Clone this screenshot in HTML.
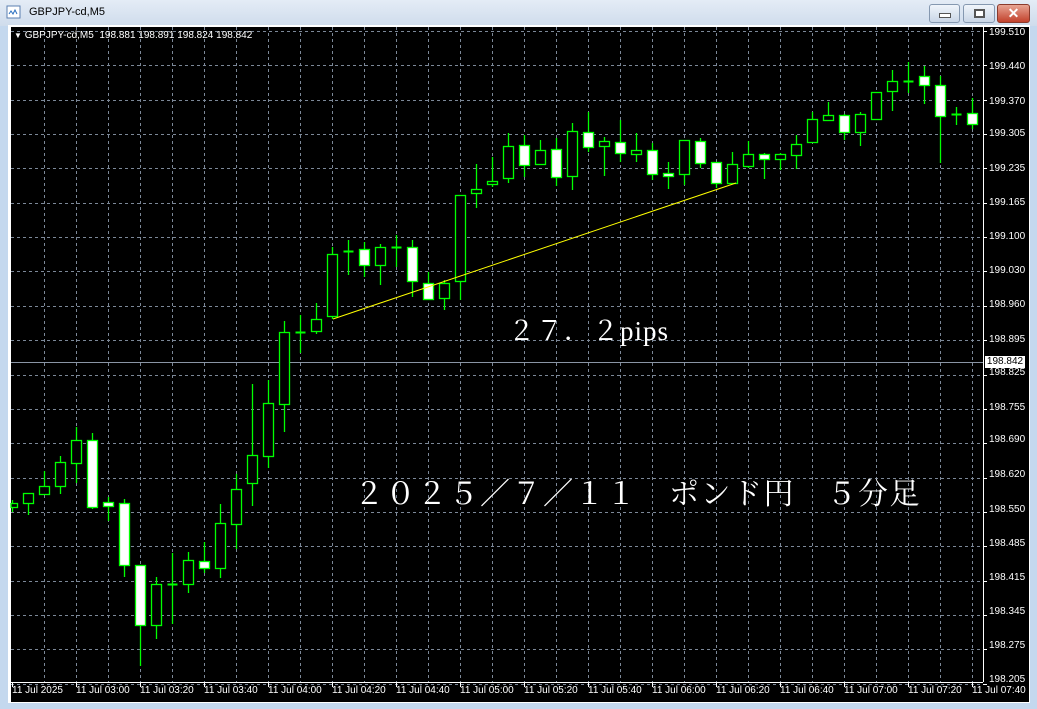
<!DOCTYPE html>
<html><head><meta charset="utf-8"><style>
body{margin:0;width:1037px;height:709px;overflow:hidden;background:#c4d8ee;font-family:"Liberation Sans",sans-serif;position:relative}
.tb{position:absolute;left:0;top:0;width:1037px;height:26px;background:linear-gradient(#e4ecf6,#cfdcec)}
.btn{position:absolute;top:4px;height:17px;border:1px solid #8598b0;border-radius:3px;background:linear-gradient(#f0f5fb,#c9d6e6)}
#chart{position:absolute;left:0;top:0}
.pl{position:absolute;left:989px;font-size:10px;color:#fff;line-height:10px;margin-top:2px}
.tl{position:absolute;top:686px;font-size:10px;color:#fff;line-height:10px;white-space:nowrap}
</style></head><body>
<div class="tb"></div>
<svg style="position:absolute;left:6px;top:5px" width="16" height="15"><rect x="1" y="1" width="13" height="12" fill="#fff" stroke="#5b7fb0"/><path d="M3 9 l2 -3 l2 3 l2 -4 l2 4" stroke="#2a6fc0" fill="none"/></svg>
<div style="position:absolute;left:29px;top:6px;font-size:11px;color:#000">GBPJPY-cd,M5</div>
<div class="btn" style="left:929px;width:29px"><div style="position:absolute;left:9px;top:8px;width:10px;height:3px;background:#fff;border:1px solid #555"></div></div>
<div class="btn" style="left:963px;width:30px"><div style="position:absolute;left:10px;top:4px;width:7px;height:5px;border:2px solid #555;background:#fff"></div></div>
<div class="btn" style="left:997px;width:31px;background:linear-gradient(#e8a593,#c2412c);border-color:#8a3a2c"><div style="position:absolute;left:0;top:0;width:31px;text-align:center;color:#fff;font-weight:bold;font-size:14px;line-height:17px">✕</div></div>
<div style="position:absolute;left:8px;top:25px;width:1022px;height:678px;background:#fff"></div>
<div style="position:absolute;left:11px;top:27px;width:1018px;height:675px;background:#000"></div>
<svg id="chart" width="1037" height="709"></svg>
<div style="position:absolute;left:14px;top:31px;font-size:10px;color:#fff;line-height:10px;white-space:nowrap"><span style="font-size:8px">▼</span> GBPJPY-cd,M5&nbsp; 198.881 198.891 198.824 198.842</div>
<div class="pl" style="top:26px">199.510</div><div class="pl" style="top:60px">199.440</div><div class="pl" style="top:95px">199.370</div><div class="pl" style="top:127px">199.305</div><div class="pl" style="top:162px">199.235</div><div class="pl" style="top:196px">199.165</div><div class="pl" style="top:230px">199.100</div><div class="pl" style="top:264px">199.030</div><div class="pl" style="top:298px">198.960</div><div class="pl" style="top:333px">198.895</div><div class="pl" style="top:366px">198.825</div><div class="pl" style="top:401px">198.755</div><div class="pl" style="top:433px">198.690</div><div class="pl" style="top:468px">198.620</div><div class="pl" style="top:503px">198.550</div><div class="pl" style="top:537px">198.485</div><div class="pl" style="top:571px">198.415</div><div class="pl" style="top:605px">198.345</div><div class="pl" style="top:639px">198.275</div><div class="pl" style="top:673px">198.205</div>
<div style="position:absolute;left:985px;top:356px;width:40px;height:12px;background:#fff;color:#000;font-size:10px;line-height:12px;text-align:center">198.842</div>
<div class="tl" style="left:12px">11 Jul 2025</div><div class="tl" style="left:76px">11 Jul 03:00</div><div class="tl" style="left:140px">11 Jul 03:20</div><div class="tl" style="left:204px">11 Jul 03:40</div><div class="tl" style="left:268px">11 Jul 04:00</div><div class="tl" style="left:332px">11 Jul 04:20</div><div class="tl" style="left:396px">11 Jul 04:40</div><div class="tl" style="left:460px">11 Jul 05:00</div><div class="tl" style="left:524px">11 Jul 05:20</div><div class="tl" style="left:588px">11 Jul 05:40</div><div class="tl" style="left:652px">11 Jul 06:00</div><div class="tl" style="left:716px">11 Jul 06:20</div><div class="tl" style="left:780px">11 Jul 06:40</div><div class="tl" style="left:844px">11 Jul 07:00</div><div class="tl" style="left:908px">11 Jul 07:20</div><div class="tl" style="left:972px">11 Jul 07:40</div>
<div style="position:absolute;left:508px;top:313px;font-size:27px;letter-spacing:1px;color:#fff;font-family:'Liberation Serif','Noto Serif CJK JP',serif;white-space:nowrap;line-height:36px">２７．２pips</div>
<div style="position:absolute;left:354px;top:476px;font-size:30px;letter-spacing:1.5px;color:#fff;font-family:'Liberation Serif','Noto Serif CJK JP',serif;white-space:nowrap;line-height:38px">２０２５／７／１１　ポンド円　５分足</div>
<script>
var s='';
for(var k=0;k<20;k++){var y=Math.round(31+34.35*k)+.5;s+='<line x1="11" x2="983" y1="'+y+'" y2="'+y+'" stroke="#7c8898" stroke-dasharray="3,3"/><line x1="983" x2="987" y1="'+y+'" y2="'+y+'" stroke="#fff"/>';}
for(var k=0;k<30;k++){var x=44+32*k+.5;s+='<line x1="'+x+'" x2="'+x+'" y1="27" y2="682" stroke="#7c8898" stroke-dasharray="3,3"/>';}
for(var k=0;k<16;k++){var x=12+64*k+.5;s+='<line x1="'+x+'" x2="'+x+'" y1="682" y2="687" stroke="#fff"/>';}
s+='<line x1="983.5" x2="983.5" y1="27" y2="682" stroke="#fff"/><line x1="11" x2="983" y1="682.5" y2="682.5" stroke="#fff"/>';
s+='<line x1="11" x2="983" y1="362.5" y2="362.5" stroke="#8a95a5"/>';
var c=[[500,512,503,507,0],[493,515,493,503,0],[471,494,486,494,0],[456,494,462,486,0],[427,483,440,463,0],[433,509,440,507,1],[497,521,502,506,1],[499,577,503,565,1],[565,666,565,625,1],[577,639,584,625,0],[553,624,584,584,0],[552,593,560,584,0],[542,573,561,568,1],[504,578,523,568,0],[474,549,489,524,0],[384,506,455,483,0],[380,468,403,456,0],[321,432,332,404,0],[315,353,332,332,0],[303,334,319,331,0],[247,319,254,316,0],[240,275,251,251,0],[242,277,249,265,1],[244,285,247,265,0],[235,267,247,247,0],[240,297,247,281,1],[272,299,283,299,1],[280,310,283,298,0],[195,300,195,281,0],[164,208,189,193,0],[157,187,181,184,0],[133,183,146,178,0],[135,177,145,165,1],[140,165,150,164,0],[138,186,149,177,1],[123,190,131,176,0],[112,152,132,147,1],[137,176,141,146,0],[120,162,142,153,1],[133,162,150,154,0],[143,180,150,174,1],[162,189,173,176,1],[140,185,140,174,0],[138,168,141,163,1],[162,188,162,183,1],[152,183,164,183,0],[141,168,154,166,0],[153,179,154,159,1],[153,170,154,159,0],[135,169,144,155,0],[112,142,119,142,0],[102,121,115,120,0],[114,140,115,132,1],[112,146,114,132,0],[92,119,92,119,0],[70,111,81,91,0],[62,93,81,81,0],[66,104,76,85,1],[76,163,85,116,1],[107,125,114,114,0],[98,129,113,124,1]];
for(var i=0;i<c.length;i++){var d=c[i],x=12+16*i+.5;
s+='<line x1="'+x+'" x2="'+x+'" y1="'+d[0]+'" y2="'+d[1]+'" stroke="#00ff00" stroke-width="1.3"/>';
if(d[3]-d[2]<1){s+='<line x1="'+(x-5)+'" x2="'+(x+5)+'" y1="'+(d[2]+.5)+'" y2="'+(d[2]+.5)+'" stroke="#00ff00" stroke-width="2"/>';}
else{var bx=(i==0?11:x-5);s+='<rect x="'+bx+'" y="'+(d[2]+.5)+'" width="'+(i==0?x+5-11:10)+'" height="'+(d[3]-d[2])+'" fill="'+(d[4]?'#fff':'#000')+'" stroke="#00ff00" stroke-width="1.3"/>';}}
s+='<line x1="333" y1="319" x2="736" y2="183" stroke="#ffff00" stroke-width="1"/>';
document.getElementById('chart').innerHTML=s;
</script>
</body></html>
